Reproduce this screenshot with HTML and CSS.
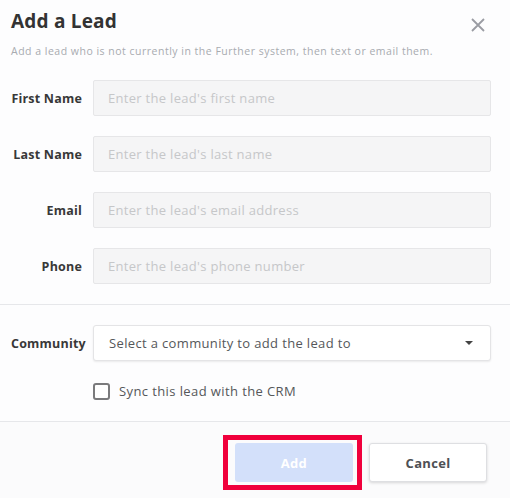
FILE: index.html
```html
<!DOCTYPE html>
<html lang="en">
<head>
  <meta charset="UTF-8">
  <title>Add a Lead</title>
  <link rel="stylesheet" href="styles.css">
</head>
<body>
<div class="modal">
  <div class="header">
    <div class="titleRow">
      <h1 class="title">Add a Lead</h1>
      <svg class="close" width="14" height="14" viewBox="0 0 14 14">
        <path d="M1 1 L13 13 M13 1 L1 13" stroke="#9a9ca3" stroke-width="1.8" fill="none"></path>
      </svg>
    </div>
    <p class="subtitle">Add a lead who is not currently in the Further system, then text or email them.</p>
  </div>

  <div class="section fields">
    <div class="row">
      <label class="label">First Name</label>
      <input class="field" type="text" placeholder="Enter the lead's first name">
    </div>
    <div class="row">
      <label class="label">Last Name</label>
      <input class="field" type="text" placeholder="Enter the lead's last name">
    </div>
    <div class="row">
      <label class="label">Email</label>
      <input class="field" type="text" placeholder="Enter the lead's email address">
    </div>
    <div class="row">
      <label class="label">Phone</label>
      <input class="field" type="text" placeholder="Enter the lead's phone number">
    </div>
  </div>

  <div class="section community">
    <div class="row">
      <label class="label">Community</label>
      <div class="select">
        <span>Select a community to add the lead to</span>
        <span class="caret"></span>
      </div>
    </div>
    <div class="checkRow">
      <span class="checkbox"></span>
      <span class="checkText">Sync this lead with the CRM</span>
    </div>
  </div>

  <div class="footer">
    <span class="highlight">
      <button class="btn add">Add</button>
    </span>
    <button class="btn cancel">Cancel</button>
  </div>
</div>
</body>
</html>
```

FILE: styles.css
```css
* {
  box-sizing: border-box;
  font-family: 'Open Sans', 'Lato', sans-serif;
}
body {
  margin: 0;
  background-color: #fdfdfe;
}
.modal {
  width: 510px;
  height: 498px;
  display: flex;
  flex-direction: column;
}
.header {
  padding: 9px 25px 0 11px;
}
.titleRow {
  display: flex;
  justify-content: space-between;
  align-items: center;
}
.title {
  margin: 0;
  font-size: 19px;
  line-height: 24px;
  font-weight: bold;
  letter-spacing: 0.2px;
  color: #333;
}
.close {
  margin-top: 8px;
}
.subtitle {
  margin: 11px 0 0 0;
  font-size: 10.5px;
  line-height: 14px;
  letter-spacing: 0.5px;
  color: #a8abb0;
}
.section {
  display: flex;
  flex-direction: column;
  padding: 0 19px 0 0;
  border-bottom: 1px solid #e6e7ea;
}
.fields {
  margin-top: 22px;
  padding-bottom: 20px;
  gap: 20px;
}
.community {
  padding-top: 20px;
  padding-bottom: 21px;
  gap: 21px;
}
.row {
  display: flex;
  align-items: center;
  gap: 11px;
}
.label {
  width: 82px;
  flex-shrink: 0;
  text-align: right;
  font-size: 12.5px;
  font-weight: bold;
  letter-spacing: 0.2px;
  color: #383838;
  white-space: nowrap;
}
.community .label {
  text-align: left;
  padding-left: 11px;
}
.field {
  flex: 1;
  height: 36px;
  padding: 0 14px;
  border: 1px solid #e6e6e8;
  border-radius: 2px;
  background-color: #f5f5f6;
  font-size: 13px;
  letter-spacing: 0.3px;
  color: #333;
  outline: none;
}
.field::placeholder {
  color: #c6c7c9;
}
.select {
  flex: 1;
  height: 36px;
  padding: 0 17px 0 15px;
  display: flex;
  align-items: center;
  justify-content: space-between;
  border: 1px solid #e4e4e6;
  border-radius: 3px;
  background-color: #fff;
  box-shadow: 0 1px 2px rgba(0, 0, 0, 0.08);
  font-size: 13px;
  letter-spacing: 0.35px;
  color: #55575a;
}
.caret {
  width: 0;
  height: 0;
  border-left: 4px solid transparent;
  border-right: 4px solid transparent;
  border-top: 4px solid #444;
}
.checkRow {
  display: flex;
  align-items: center;
  gap: 9px;
  padding-left: 93px;
}
.checkbox {
  width: 17px;
  height: 17px;
  border: 2px solid #7a7a7c;
  border-radius: 3px;
  background-color: #fff;
}
.checkText {
  font-size: 13px;
  letter-spacing: 0.4px;
  color: #55575a;
}
.footer {
  flex: 1;
  display: flex;
  justify-content: flex-end;
  align-items: flex-start;
  gap: 7px;
  padding: 13px 23px 0 0;
  background-color: #fbfbfc;
}
.highlight {
  display: flex;
  padding: 3px 4px 3px 7px;
  border: 5px solid #f0003c;
}
.btn {
  width: 118px;
  height: 39px;
  border-radius: 3px;
  font-size: 13px;
  font-weight: bold;
  letter-spacing: 0.3px;
  cursor: pointer;
}
.add {
  border: none;
  background-color: #d3e0fa;
  color: #fff;
}
.cancel {
  margin-top: 8px;
  border: 1px solid #dedfe2;
  background-color: #fff;
  color: #4e5054;
  box-shadow: 0 1px 3px rgba(0, 0, 0, 0.15);
}
```
